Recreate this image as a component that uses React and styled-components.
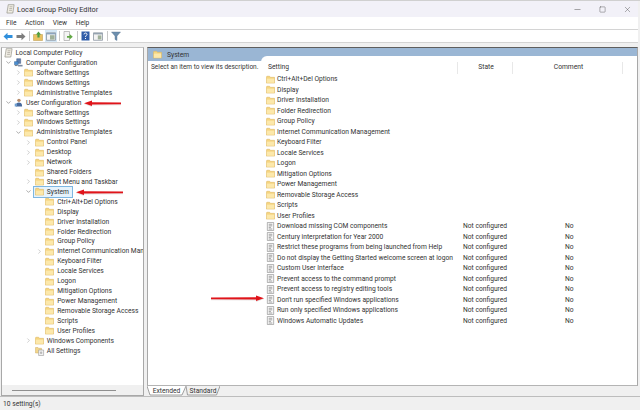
import React from "react";
import styled, { createGlobalStyle } from "styled-components";
import { Minus, Square, X, ChevronRight, ChevronDown } from "lucide-react";

const treeRows = [
  { level: 0, label: "Local Computer Policy", icon: "scroll" },
  { level: 1, label: "Computer Configuration", icon: "computer", twisty: "open" },
  { level: 2, label: "Software Settings", twisty: "closed" },
  { level: 2, label: "Windows Settings", twisty: "closed" },
  { level: 2, label: "Administrative Templates", twisty: "closed" },
  { level: 1, label: "User Configuration", icon: "user", twisty: "open" },
  { level: 2, label: "Software Settings", twisty: "closed" },
  { level: 2, label: "Windows Settings", twisty: "closed" },
  { level: 2, label: "Administrative Templates", twisty: "open" },
  { level: 3, label: "Control Panel", twisty: "closed" },
  { level: 3, label: "Desktop", twisty: "closed" },
  { level: 3, label: "Network", twisty: "closed" },
  { level: 3, label: "Shared Folders" },
  { level: 3, label: "Start Menu and Taskbar", twisty: "closed" },
  { level: 3, label: "System", twisty: "open", selected: true },
  { level: 4, label: "Ctrl+Alt+Del Options" },
  { level: 4, label: "Display" },
  { level: 4, label: "Driver Installation" },
  { level: 4, label: "Folder Redirection" },
  { level: 4, label: "Group Policy" },
  { level: 4, label: "Internet Communication Management", twisty: "closed" },
  { level: 4, label: "Keyboard Filter" },
  { level: 4, label: "Locale Services" },
  { level: 4, label: "Logon" },
  { level: 4, label: "Mitigation Options" },
  { level: 4, label: "Power Management" },
  { level: 4, label: "Removable Storage Access" },
  { level: 4, label: "Scripts" },
  { level: 4, label: "User Profiles" },
  { level: 3, label: "Windows Components", twisty: "closed" },
  { level: 3, label: "All Settings", icon: "settings" },
];

const folders = [
  "Ctrl+Alt+Del Options",
  "Display",
  "Driver Installation",
  "Folder Redirection",
  "Group Policy",
  "Internet Communication Management",
  "Keyboard Filter",
  "Locale Services",
  "Logon",
  "Mitigation Options",
  "Power Management",
  "Removable Storage Access",
  "Scripts",
  "User Profiles",
];

const policies = [
  "Download missing COM components",
  "Century interpretation for Year 2000",
  "Restrict these programs from being launched from Help",
  "Do not display the Getting Started welcome screen at logon",
  "Custom User Interface",
  "Prevent access to the command prompt",
  "Prevent access to registry editing tools",
  "Don't run specified Windows applications",
  "Run only specified Windows applications",
  "Windows Automatic Updates",
];

const FolderIcon = ({ size = 9 }) => (
  <svg width={size} height={size} viewBox="0 0 10 10">
    <path d="M0.5 2V9H9.5V2.6H5L4 1.4H1Z" fill="#f6d57f" stroke="#dcb660" strokeWidth="0.6" />
    <path d="M1 4H9V8.6H1Z" fill="#fce8ab" />
  </svg>
);

const PolicyIcon = () => (
  <svg width="9" height="9" viewBox="0 0 10 10">
    <path d="M1.5 0.5H8.5V9.5H1.5Z" fill="#fafafa" stroke="#8a8a8a" strokeWidth="0.7" />
    <path d="M3 2.5H7M3 4.3H7M3 6H5.5M3 7.8H7" stroke="#6f6f6f" strokeWidth="0.7" />
  </svg>
);

const ScrollIcon = () => (
  <svg width="9" height="10" viewBox="0 0 10 11">
    <path d="M2.5 0.7H9L7.6 10H1Z" fill="#f0ede4" stroke="#8d8a80" strokeWidth="0.7" />
    <path d="M4 3H7.2M3.7 5H6.9M3.4 7H6.6" stroke="#8d8a80" strokeWidth="0.6" />
  </svg>
);

const ComputerIcon = () => (
  <svg width="9" height="9" viewBox="0 0 10 10">
    <path d="M3 0.8H7.4V6H3Z" fill="#5f7fb0" stroke="#39507a" strokeWidth="0.5" />
    <path d="M0.5 4H4.6V7.5H0.5Z" fill="#4c8fd1" stroke="#2f5d92" strokeWidth="0.5" />
    <path d="M4.5 7.6H9.5V9.4H4.5Z" fill="#7b8aa3" />
    <path d="M1 8.4H4" stroke="#555" strokeWidth="0.8" />
  </svg>
);

const UserIcon = () => (
  <svg width="9" height="9" viewBox="0 0 10 10">
    <circle cx="5.5" cy="2.6" r="1.9" fill="#b58a68" />
    <path d="M2 9.5C2 6 3.5 5 5.5 5S9 6 9 9.5Z" fill="#47699c" />
    <path d="M0.8 6.2H3.4V9.4H0.8Z" fill="#6f9fd0" />
  </svg>
);

const SettingsIcon = () => (
  <svg width="10" height="10" viewBox="0 0 10 10">
    <path d="M0.5 1.5H3L3.6 2.3H6.5V7H0.5Z" fill="#f3d68b" stroke="#cfae66" strokeWidth="0.5" />
    <path d="M3.6 4H8.6V9.5H3.6Z" fill="#f1f1f1" stroke="#9a9a9a" strokeWidth="0.6" />
    <circle cx="6.1" cy="6.8" r="1.2" fill="#b9b9b9" />
  </svg>
);

const treeIcons = {
  scroll: ScrollIcon,
  computer: ComputerIcon,
  user: UserIcon,
  settings: SettingsIcon,
};

const Arrow = ({ width, flip }) => (
  <svg width={width} height="7" viewBox={`0 0 ${width} 7`}>
    <g transform={flip ? `translate(${width} 0) scale(-1 1)` : undefined}>
      <path d={`M0 3.2L8 0.4V2.2L${width} 2.6V4.4L8 4.6V6.2Z`} fill="#d9d0d0" opacity="0.6" transform="translate(0 0.8)" />
      <path d={`M0 3.2L8 0.4V2.2L${width} 2.6V4.2L8 4.4V6Z`} fill="#e0141a" />
    </g>
  </svg>
);

const App = () => {
  return (
    <>
      <GlobalStyle />
      <Window>
        <TitleBar>
          <ScrollIcon />
          <TitleText>Local Group Policy Editor</TitleText>
          <WindowControls>
            <Minus size={9} strokeWidth={1.2} />
            <Square size={7} strokeWidth={1.4} />
            <X size={9} strokeWidth={1.1} />
          </WindowControls>
        </TitleBar>
        <MenuBar>
          <span>File</span>
          <span>Action</span>
          <span>View</span>
          <span>Help</span>
        </MenuBar>
        <Toolbar>
          <ToolButton>
            <svg width="10" height="9" viewBox="0 0 10 9">
              <path d="M0.5 4.5L4.5 0.8V3H9.5V6H4.5V8.2Z" fill="#2f8fdc" />
            </svg>
          </ToolButton>
          <ToolButton>
            <svg width="10" height="9" viewBox="0 0 10 9">
              <path d="M9.5 4.5L5.5 0.8V3H0.5V6H5.5V8.2Z" fill="#7d7d7d" />
            </svg>
          </ToolButton>
          <ToolSep />
          <ToolButton>
            <svg width="10" height="10" viewBox="0 0 10 10">
              <path d="M0.5 3.5H9.5V9.5H0.5Z" fill="#e9c262" stroke="#b89544" strokeWidth="0.5" />
              <path d="M5.5 0.5L8 3.4H6.6V6.5H4.4V3.4H3Z" fill="#4f9d3f" />
            </svg>
          </ToolButton>
          <ToolButton $active>
            <svg width="10" height="9" viewBox="0 0 10 9">
              <path d="M0.5 0.8H9.5V8.3H0.5Z" fill="#f3f3f3" stroke="#7e8a96" strokeWidth="0.7" />
              <path d="M0.8 1H9.2V2.4H0.8Z" fill="#8ba5bf" />
              <path d="M4 3.2H8.6V7.6H4Z" fill="#9fb09a" />
            </svg>
          </ToolButton>
          <ToolSep />
          <ToolButton>
            <svg width="10" height="10" viewBox="0 0 10 10">
              <path d="M1 0.5H6.5V9.5H1Z" fill="#f4f4f4" stroke="#9a9a9a" strokeWidth="0.6" />
              <path d="M4 5L6.6 5V3L9.8 5.8L6.6 8.6V6.8H4Z" fill="#62a845" />
            </svg>
          </ToolButton>
          <ToolSep />
          <ToolButton>
            <svg width="9" height="10" viewBox="0 0 9 10">
              <path d="M0.5 0.5H8.5V9.5H0.5Z" fill="#2f5ca8" />
              <path d="M3 3.4C3 1.6 6 1.6 6 3.3C6 4.5 4.5 4.5 4.5 6" stroke="#fff" strokeWidth="1" fill="none" />
              <path d="M4 7H5V8H4Z" fill="#fff" />
            </svg>
          </ToolButton>
          <ToolButton>
            <svg width="10" height="9" viewBox="0 0 10 9">
              <path d="M0.5 0.8H9.5V8.3H0.5Z" fill="#f3f3f3" stroke="#7e8a96" strokeWidth="0.7" />
              <path d="M0.8 1H9.2V2.4H0.8Z" fill="#95a3b0" />
              <path d="M4.8 3.4H8.4V7.4H4.8Z" fill="#9fb09a" />
            </svg>
          </ToolButton>
          <ToolSep />
          <ToolButton>
            <svg width="10" height="10" viewBox="0 0 10 10">
              <path d="M0.5 1H9.5L6 5V9.5L4 8.4V5Z" fill="#6d8fae" stroke="#56728d" strokeWidth="0.4" />
            </svg>
          </ToolButton>
        </Toolbar>
        <Workspace>
          <TreeColumn>
            <TreePane>
              {treeRows.map((row, i) => {
                const Icon = treeIcons[row.icon] || FolderIcon;
                return (
                  <TreeRow key={i} $level={row.level}>
                    {row.level > 0 && (
                      <Twisty>
                        {row.twisty === "open" && <ChevronDown size={7} strokeWidth={1.5} color="#444" />}
                        {row.twisty === "closed" && <ChevronRight size={7} strokeWidth={1.2} color="#777" />}
                      </Twisty>
                    )}
                    <TreeLabel $selected={row.selected}>
                      <TreeIcon>
                        <Icon />
                      </TreeIcon>
                      {row.label}
                    </TreeLabel>
                  </TreeRow>
                );
              })}
            </TreePane>
            <TreeScroll>
              <TreeThumb />
            </TreeScroll>
          </TreeColumn>
          <RightColumn>
            <DetailPane>
              <Band>
                <FolderIcon size={9} />
                <BandTitle>System</BandTitle>
              </Band>
              <DetailBody>
                <Description>Select an item to view its description.</Description>
                <ListPanel>
                  <ListHeader>
                    <SettingHead>Setting</SettingHead>
                    <StateHead>State</StateHead>
                    <CommentHead>Comment</CommentHead>
                  </ListHeader>
                  {folders.map((name) => (
                    <ListRow key={name}>
                      <SettingCell>
                        <FolderIcon size={9} />
                        {name}
                      </SettingCell>
                    </ListRow>
                  ))}
                  {policies.map((name) => (
                    <ListRow key={name}>
                      <SettingCell>
                        <PolicyIcon />
                        {name}
                      </SettingCell>
                      <StateCell>Not configured</StateCell>
                      <CommentCell>No</CommentCell>
                    </ListRow>
                  ))}
                </ListPanel>
              </DetailBody>
            </DetailPane>
            <Tabs>
              <Tab $width={39} $active>
                <TabShape width="39" height="10" viewBox="0 0 39 10">
                  <path d="M0 0L3 9H35L39 0" fill="#fff" stroke="#8a8a8a" strokeWidth="0.8" />
                </TabShape>
                <TabLabel>Extended</TabLabel>
              </Tab>
              <Tab $width={34}>
                <TabShape width="34" height="10" viewBox="0 0 34 10">
                  <path d="M0 0L1.5 9H30.5L34 0" fill="#f0f0f0" stroke="#8a8a8a" strokeWidth="0.8" />
                </TabShape>
                <TabLabel>Standard</TabLabel>
              </Tab>
            </Tabs>
          </RightColumn>
        </Workspace>
        <StatusBar>10 setting(s)</StatusBar>
        <ArrowMark $left={84} $top={99}>
          <Arrow width={37} />
        </ArrowMark>
        <ArrowMark $left={76} $top={188}>
          <Arrow width={47} />
        </ArrowMark>
        <ArrowMark $left={211} $top={294}>
          <Arrow width={53} flip />
        </ArrowMark>
      </Window>
    </>
  );
};

export default App;

const GlobalStyle = createGlobalStyle`
  html, body {
    margin: 0;
    padding: 0;
    background: #f0f0f0;
  }
  * {
    box-sizing: border-box;
  }
`;

const Window = styled.div`
  position: relative;
  display: flex;
  flex-direction: column;
  width: 640px;
  height: 410px;
  overflow: hidden;
  padding-right: 2px;
  border-top: 1px solid #d0d0d0;
  background: #f0f0f0;
  color: #333;
  font-family: Roboto, "Noto Sans", sans-serif;
  font-size: 6.7px;
  svg {
    display: block;
    flex: none;
  }
`;

const TitleBar = styled.div`
  display: flex;
  align-items: center;
  height: 16px;
  padding-left: 6px;
  background: #f2f1f8;
`;

const TitleText = styled.span`
  margin-left: 2px;
  font-size: 7.3px;
`;

const WindowControls = styled.div`
  display: flex;
  align-items: center;
  justify-content: space-between;
  width: 59px;
  margin-left: auto;
  margin-right: 6.5px;
  color: #444;
`;

const MenuBar = styled.div`
  display: flex;
  align-items: center;
  gap: 8.5px;
  height: 13px;
  padding-left: 6px;
  background: #fff;
  border-bottom: 1px solid #d4d4d4;
  font-size: 6.7px;
`;

const Toolbar = styled.div`
  display: flex;
  align-items: center;
  height: 13px;
  padding-left: 2px;
  background: #fff;
  border-bottom: 1px solid #d4d4d4;
`;

const ToolButton = styled.div`
  display: flex;
  align-items: center;
  justify-content: center;
  width: 12.5px;
  height: 12px;
  background: ${(p) => (p.$active ? "#d5e8f6" : "transparent")};
`;

const ToolSep = styled.div`
  width: 1px;
  height: 10px;
  margin: 0 2px;
  background: #c8c8c8;
`;

const Workspace = styled.div`
  display: flex;
  flex: 1;
  gap: 3px;
  min-height: 0;
  padding: 4px 0 0 1px;
`;

const TreeColumn = styled.div`
  display: flex;
  flex-direction: column;
  width: 143px;
  border: 1px solid #a8a8a8;
  border-top-color: #c4c4c4;
`;

const TreePane = styled.div`
  flex: 1;
  min-height: 0;
  overflow: hidden;
  background: #fff;
`;

const TreeRow = styled.div`
  display: flex;
  align-items: center;
  height: 9.93px;
  padding-left: ${(p) => (p.$level === 0 ? 0.5 : 1 + (p.$level - 1) * 10.4)}px;
  white-space: nowrap;
`;

const Twisty = styled.span`
  display: flex;
  align-items: center;
  justify-content: center;
  flex: none;
  width: 10px;
`;

const TreeLabel = styled.span`
  display: inline-flex;
  align-items: center;
  height: 10px;
  padding-right: ${(p) => (p.$selected ? "3px" : "0")};
  background: ${(p) => (p.$selected ? "#e6f3fc" : "transparent")};
  outline: ${(p) => (p.$selected ? "1px solid #7db7e2" : "none")};
`;

const TreeIcon = styled.span`
  flex: none;
  width: 13px;
  padding-left: 1px;
`;

const TreeScroll = styled.div`
  display: flex;
  align-items: center;
  flex: none;
  height: 10px;
  padding: 0 10px;
  background: #f0f0f0;
`;

const TreeThumb = styled.div`
  width: 104px;
  height: 1px;
  background: #8f8f8f;
`;

const RightColumn = styled.div`
  display: flex;
  flex: 1;
  flex-direction: column;
  min-width: 0;
`;

const DetailPane = styled.div`
  display: flex;
  flex: 1;
  flex-direction: column;
  min-height: 0;
  border: 1px solid #a8a8a8;
  border-top-color: #5e5e5e;
  border-bottom-color: #b4b4b4;
  background: #fff;
`;

const Band = styled.div`
  display: flex;
  align-items: center;
  flex: none;
  gap: 5px;
  height: 13px;
  padding-left: 5px;
  background: #9ab6d4;
`;

const BandTitle = styled.span`
  font-size: 6.7px;
`;

const DetailBody = styled.div`
  display: flex;
  flex: 1;
  min-height: 0;
`;

const Description = styled.div`
  flex: none;
  width: 113px;
  padding: 2px 0 0 3px;
  font-size: 6.5px;
  white-space: nowrap;
`;

const ListPanel = styled.div`
  flex: 1;
  min-width: 0;
  margin-top: -5px;
  padding-top: 6px;
  border-top-left-radius: 6px;
  background: #fff;
`;

const ListHeader = styled.div`
  display: flex;
  align-items: center;
  height: 12px;
`;

const SettingHead = styled.div`
  width: 197px;
  height: 100%;
  padding: 1px 0 0 7px;
  border-right: 1px solid #e8e8e8;
`;

const StateHead = styled.div`
  width: 55px;
  height: 100%;
  padding: 1px 0 0 2px;
  border-right: 1px solid #e8e8e8;
  text-align: center;
`;

const CommentHead = styled.div`
  width: 110px;
  height: 100%;
  padding: 1px 0 0 2px;
  border-right: 1px solid #e8e8e8;
  text-align: center;
`;

const ListRow = styled.div`
  display: flex;
  align-items: center;
  height: 10.5px;
  white-space: nowrap;
`;

const SettingCell = styled.div`
  display: flex;
  align-items: center;
  gap: 2px;
  width: 202px;
  padding-left: 5px;
`;

const StateCell = styled.div`
  width: 102px;
`;

const CommentCell = styled.div`
  width: 20px;
`;

const Tabs = styled.div`
  display: flex;
  flex: none;
  height: 10px;
`;

const Tab = styled.div`
  position: relative;
  width: ${(p) => p.$width}px;
  height: 10px;
  padding-top: 2px;
  line-height: 7px;
  text-align: center;
`;

const TabShape = styled.svg`
  position: absolute;
  left: 0;
  top: 0;
`;

const TabLabel = styled.span`
  position: relative;
  font-size: 6.7px;
`;

const StatusBar = styled.div`
  display: flex;
  align-items: center;
  flex: none;
  height: 14px;
  margin-right: -2px;
  padding-left: 3px;
  border-top: 1px solid #bdbdbd;
  background: #f0f0f0;
`;

const ArrowMark = styled.div`
  position: absolute;
  left: ${(p) => p.$left}px;
  top: ${(p) => p.$top}px;
`;
